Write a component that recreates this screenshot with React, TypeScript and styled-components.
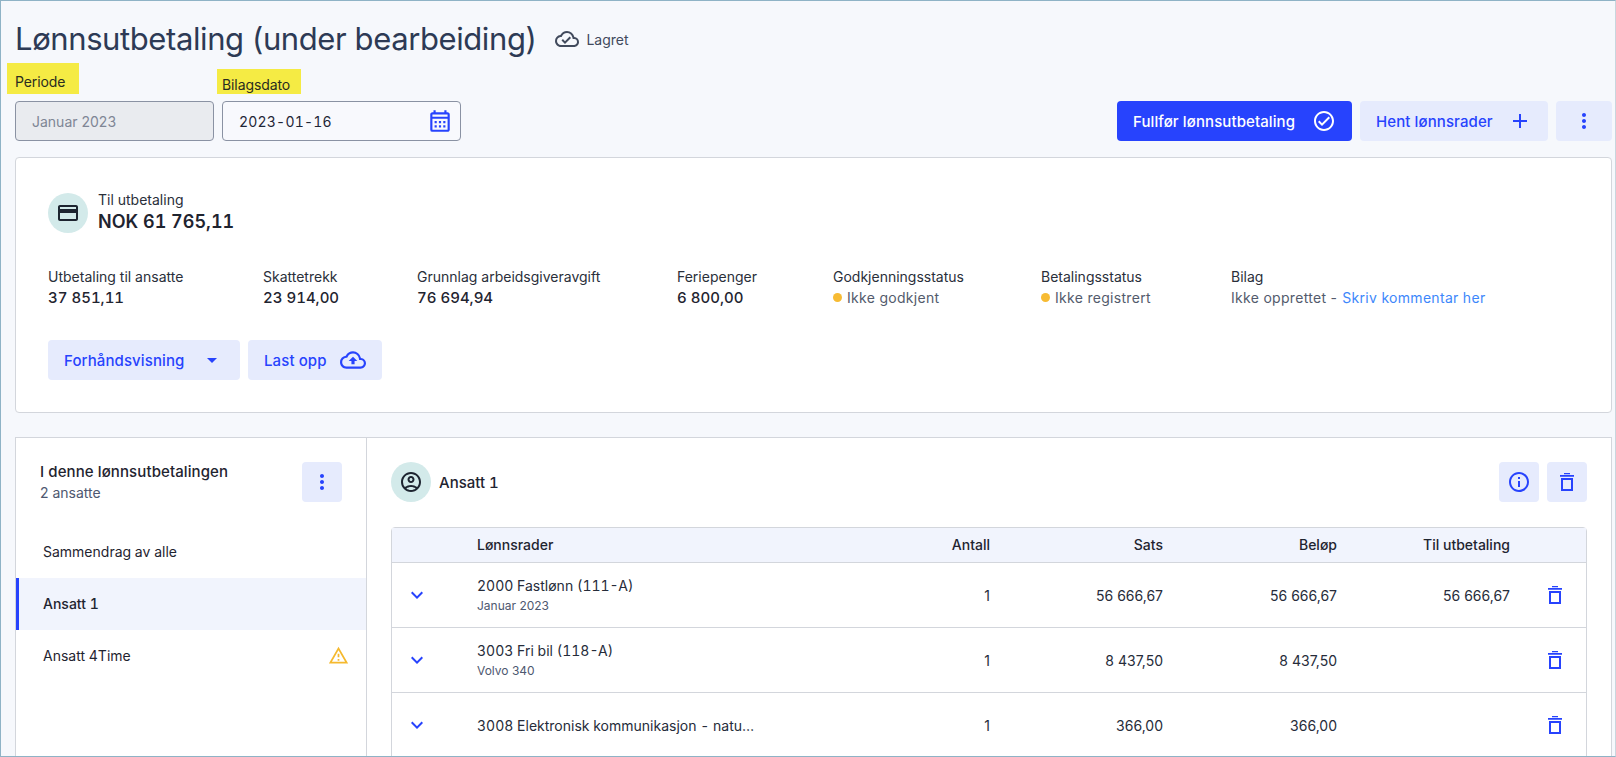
import React from "react";
import styled, { createGlobalStyle } from "styled-components";
import {
  MdAdd,
  MdArrowDropDown,
  MdExpandMore,
  MdInfoOutline,
  MdMoreVert,
  MdOutlineAccountCircle,
  MdOutlineCalendarMonth,
  MdOutlineCheckCircle,
  MdOutlineCloudDone,
  MdOutlineCloudUpload,
  MdOutlineCreditCard,
  MdOutlineWarningAmber,
} from "react-icons/md";

const GlobalStyle = createGlobalStyle`
  html, body {
    margin: 0;
    padding: 0;
    height: 100%;
    overflow: hidden;
    background: #f6f8fc;
  }
  * {
    box-sizing: border-box;
  }
  body {
    font-family: "Inter", "Liberation Sans", sans-serif;
    color: #1f2430;
  }
`;

function TrashIcon() {
  return (
    <svg width="24" height="24" viewBox="0 0 24 24" fill="currentColor">
      <path d="M9 3h6v1.3H9zM5 5h14v1.7H5z" />
      <path d="M6 8h12v13H6zM8 10v9h8v-9z" fillRule="evenodd" />
    </svg>
  );
}

const stats = [
  { label: "Utbetaling til ansatte", value: "37 851,11", width: 215 },
  { label: "Skattetrekk", value: "23 914,00", width: 154 },
  { label: "Grunnlag arbeidsgiveravgift", value: "76 694,94", width: 260 },
  { label: "Feriepenger", value: "6 800,00", width: 156 },
];

const rows = [
  { title: "2000 Fastlønn (111-A)", sub: "Januar 2023", count: "1", rate: "56 666,67", sum: "56 666,67", pay: "56 666,67" },
  { title: "3003 Fri bil (118-A)", sub: "Volvo 340", count: "1", rate: "8 437,50", sum: "8 437,50", pay: "" },
  { title: "3008 Elektronisk kommunikasjon - naturalytelse", sub: "", count: "1", rate: "366,00", sum: "366,00", pay: "" },
];

export default function App() {
  return (
    <Page>
      <GlobalStyle />
      <TitleRow>
        <Title>Lønnsutbetaling (under bearbeiding)</Title>
        <SavedState>
          <MdOutlineCloudDone size={24} />
          Lagret
        </SavedState>
      </TitleRow>

      <Toolbar>
        <Fields>
          <Field>
            <Marked $top={0} $left={8} $right={14}>Periode</Marked>
            <Input $disabled>Januar 2023</Input>
          </Field>
          <DateField>
            <Marked $top={6} $left={5} $right={11}>Bilagsdato</Marked>
            <Input>
              <DateValue>2023-01-16</DateValue>
              <MdOutlineCalendarMonth size={26} color="#2743fd" />
            </Input>
          </DateField>
        </Fields>
        <Actions>
          <PrimaryButton>
            Fullfør lønnsutbetaling
            <MdOutlineCheckCircle size={24} />
          </PrimaryButton>
          <SoftButton $width={188}>
            Hent lønnsrader
            <MdAdd size={24} />
          </SoftButton>
          <IconButton $width={56}>
            <MdMoreVert size={24} />
          </IconButton>
        </Actions>
      </Toolbar>

      <SummaryCard>
        <TotalRow>
          <IconCircle>
            <MdOutlineCreditCard size={24} />
          </IconCircle>
          <div>
            <TotalLabel>Til utbetaling</TotalLabel>
            <TotalValue>NOK 61 765,11</TotalValue>
          </div>
        </TotalRow>

        <StatRow>
          {stats.map((s) => (
            <Stat key={s.label} $width={s.width}>
              <StatLabel>{s.label}</StatLabel>
              <StatValue>{s.value}</StatValue>
            </Stat>
          ))}
          <Stat $width={208}>
            <StatLabel>Godkjenningsstatus</StatLabel>
            <StatusText>
              <Dot />
              Ikke godkjent
            </StatusText>
          </Stat>
          <Stat $width={190}>
            <StatLabel>Betalingsstatus</StatLabel>
            <StatusText>
              <Dot />
              Ikke registrert
            </StatusText>
          </Stat>
          <Stat $width={300}>
            <StatLabel>Bilag</StatLabel>
            <StatusText>
              Ikke opprettet -<CommentLink>Skriv kommentar her</CommentLink>
            </StatusText>
          </Stat>
        </StatRow>

        <CardButtons>
          <SoftButton $width={192}>
            Forhåndsvisning
            <MdArrowDropDown size={24} />
          </SoftButton>
          <SoftButton $width={134}>
            Last opp
            <MdOutlineCloudUpload size={26} />
          </SoftButton>
        </CardButtons>
      </SummaryCard>

      <Panel>
        <Sidebar>
          <SideHeader>
            <div>
              <SideTitle>I denne lønnsutbetalingen</SideTitle>
              <SideSub>2 ansatte</SideSub>
            </div>
            <IconButton $width={40}>
              <MdMoreVert size={24} />
            </IconButton>
          </SideHeader>
          <NavItem>Sammendrag av alle</NavItem>
          <NavItem $active>Ansatt 1</NavItem>
          <NavItem>
            Ansatt 4Time
            <MdOutlineWarningAmber size={21} color="#f5b92e" />
          </NavItem>
        </Sidebar>

        <Detail>
          <DetailHeader>
            <Employee>
              <IconCircle>
                <MdOutlineAccountCircle size={24} />
              </IconCircle>
              Ansatt 1
            </Employee>
            <DetailActions>
              <IconButton $width={40}>
                <MdInfoOutline size={24} />
              </IconButton>
              <IconButton $width={40}>
                <TrashIcon />
              </IconButton>
            </DetailActions>
          </DetailHeader>

          <Table>
            <HeadRow>
              <span />
              <span>Lønnsrader</span>
              <HeadRight>Antall</HeadRight>
              <HeadRight>Sats</HeadRight>
              <HeadRight>Beløp</HeadRight>
              <HeadRight>Til utbetaling</HeadRight>
              <span />
            </HeadRow>
            {rows.map((r) => (
              <BodyRow key={r.title}>
                <RowToggle>
                  <MdExpandMore size={24} />
                </RowToggle>
                <div>
                  <RowTitle>{r.title}</RowTitle>
                  {r.sub && <RowSub>{r.sub}</RowSub>}
                </div>
                <Cell>{r.count}</Cell>
                <Cell>{r.rate}</Cell>
                <Cell>{r.sum}</Cell>
                <Cell>{r.pay}</Cell>
                <RowDelete>
                  <TrashIcon />
                </RowDelete>
              </BodyRow>
            ))}
          </Table>
        </Detail>
      </Panel>
    </Page>
  );
}

const Page = styled.div`
  height: 757px;
  padding: 0 3px 0 14px;
  overflow: hidden;
  background: #f6f8fc;
  border: 1px solid #8fb3c6;
  border-right-color: #c8d6de;
`;
const TitleRow = styled.div`
  display: flex;
  align-items: center;
  height: 62px;
  padding-top: 14px;
`;
const Title = styled.h1`
  margin: 0;
  font-size: 31px;
  font-weight: 400;
  line-height: 44px;
  letter-spacing: -0.4px;
  color: #2d3a55;
`;
const SavedState = styled.div`
  display: flex;
  align-items: center;
  gap: 7px;
  margin-left: 19px;
  font-size: 14px;
  color: #414a5c;
`;
const Toolbar = styled.div`
  display: flex;
  justify-content: space-between;
  align-items: flex-end;
  height: 78px;
`;
const Fields = styled.div`
  display: flex;
  gap: 8px;
`;
const Field = styled.div`
  width: 199px;
`;
const DateField = styled(Field)`
  width: 239px;
`;
const Marked = styled.div<{ $top: number; $left: number; $right: number }>`
  display: flex;
  align-items: center;
  width: fit-content;
  height: ${(p) => 31 - p.$top}px;
  margin: ${(p) => p.$top}px 0 7px ${(p) => -p.$left}px;
  padding: 6px ${(p) => p.$right}px 0 ${(p) => p.$left}px;
  font-size: 14px;
  letter-spacing: -0.1px;
  background: #f5eb44;
  color: #2a2c20;
`;
const Input = styled.div<{ $disabled?: boolean }>`
  display: flex;
  align-items: center;
  justify-content: space-between;
  height: 40px;
  padding: 0 7px 0 16px;
  font-size: 14px;
  border: 1px solid #8a92a3;
  border-radius: 4px;
  background: ${(p) => (p.$disabled ? "#e9ebef" : "#f8f9fd")};
  color: ${(p) => (p.$disabled ? "#7f8695" : "#1f2637")};
`;
const DateValue = styled.span`
  font-variant-numeric: tabular-nums;
  letter-spacing: 0.2px;
`;
const Actions = styled.div`
  display: flex;
  gap: 8px;
`;
const Button = styled.button`
  display: flex;
  align-items: center;
  justify-content: space-between;
  height: 40px;
  padding: 0 16px;
  border: 0;
  border-radius: 4px;
  font-family: inherit;
  font-size: 15px;
  font-weight: 500;
  letter-spacing: 0.1px;
`;
const PrimaryButton = styled(Button)`
  width: 235px;
  background: #2743fd;
  color: #fff;
`;
const SoftButton = styled(Button)<{ $width: number }>`
  width: ${(p) => p.$width}px;
  background: #e6ebfd;
  color: #2743fd;
`;
const IconButton = styled(SoftButton)`
  justify-content: center;
  padding: 0;
`;
const SummaryCard = styled.section`
  height: 256px;
  margin-top: 16px;
  padding: 33px 32px 0;
  background: #fff;
  border: 1px solid #d3d6dc;
  border-radius: 4px;
`;
const TotalRow = styled.div`
  display: flex;
  align-items: center;
  gap: 10px;
`;
const IconCircle = styled.div`
  display: flex;
  align-items: center;
  justify-content: center;
  width: 40px;
  height: 40px;
  border-radius: 50%;
  background: #d3eaea;
  color: #1d2430;
`;
const TotalLabel = styled.div`
  font-size: 14px;
  line-height: 17px;
  color: #2a2f3a;
`;
const TotalValue = styled.div`
  font-size: 18px;
  font-weight: 600;
  line-height: 27px;
  font-variant-numeric: tabular-nums;
  color: #1f2430;
`;
const StatRow = styled.div`
  display: flex;
  margin-top: 32px;
`;
const Stat = styled.div<{ $width: number }>`
  flex: none;
  width: ${(p) => p.$width}px;
`;
const StatLabel = styled.div`
  font-size: 14px;
  line-height: 20px;
  color: #2a2f3a;
`;
const StatValue = styled.div`
  font-size: 15px;
  font-weight: 500;
  line-height: 21px;
  font-variant-numeric: tabular-nums;
  color: #1f2430;
`;
const StatusText = styled.div`
  display: flex;
  align-items: center;
  gap: 5px;
  font-size: 14px;
  line-height: 21px;
  letter-spacing: 0.3px;
  white-space: pre;
  color: #535b6c;
`;
const Dot = styled.span`
  width: 9px;
  height: 9px;
  border-radius: 50%;
  background: #f7bb33;
`;
const CommentLink = styled.span`
  color: #3d87fb;
`;
const CardButtons = styled.div`
  display: flex;
  gap: 8px;
  margin-top: 32px;
`;
const Panel = styled.section`
  display: flex;
  height: 340px;
  margin-top: 24px;
  background: #fff;
  border: 1px solid #d3d6dc;
`;
const Sidebar = styled.aside`
  flex: none;
  width: 351px;
  border-right: 1px solid #d3d6dc;
`;
const SideHeader = styled.div`
  display: flex;
  justify-content: space-between;
  align-items: center;
  height: 88px;
  padding: 0 24px;
`;
const SideTitle = styled.div`
  font-size: 15px;
  font-weight: 500;
  line-height: 22px;
  letter-spacing: 0.1px;
  color: #1f2430;
`;
const SideSub = styled.div`
  font-size: 14px;
  line-height: 20px;
  color: #4e5870;
`;
const NavItem = styled.div<{ $active?: boolean }>`
  display: flex;
  align-items: center;
  justify-content: space-between;
  height: 52px;
  padding: 0 17px 2px ${(p) => (p.$active ? 24 : 27)}px;
  font-size: 14px;
  font-weight: ${(p) => (p.$active ? 500 : 400)};
  font-variant-numeric: tabular-nums;
  background: ${(p) => (p.$active ? "#f1f4fd" : "transparent")};
  border-left: ${(p) => (p.$active ? "3px solid #2743fd" : "0")};
  color: #1f2430;
`;
const Detail = styled.div`
  flex: 1;
  min-width: 0;
  padding: 24px 24px 0;
`;
const DetailHeader = styled.div`
  display: flex;
  justify-content: space-between;
  align-items: center;
  margin-bottom: 25px;
`;
const Employee = styled.div`
  display: flex;
  align-items: center;
  gap: 8px;
  font-size: 15px;
  font-weight: 500;
  font-variant-numeric: tabular-nums;
`;
const DetailActions = styled.div`
  display: flex;
  gap: 8px;
`;
const Table = styled.div`
  border: 1px solid #d3d6dc;
  border-radius: 4px 4px 0 0;
`;
const columns = "85px 1fr 100px 173px 174px 173px 76px";
const HeadRow = styled.div`
  display: grid;
  grid-template-columns: ${columns};
  align-items: center;
  height: 35px;
  padding-bottom: 1px;
  font-size: 14px;
  font-weight: 500;
  background: #f1f4fd;
  border-bottom: 1px solid #d3d6dc;
`;
const HeadRight = styled.span`
  text-align: right;
`;
const BodyRow = styled.div`
  display: grid;
  grid-template-columns: ${columns};
  align-items: center;
  height: 65px;
  border-bottom: 1px solid #d3d6dc;
`;
const RowToggle = styled.div`
  display: flex;
  padding-left: 13px;
  color: #2743fd;
`;
const RowDelete = styled.div`
  display: flex;
  justify-content: flex-end;
  padding-right: 19px;
  color: #2743fd;
`;
const RowTitle = styled.div`
  max-width: 280px;
  overflow: hidden;
  white-space: nowrap;
  text-overflow: ellipsis;
  font-size: 14px;
  line-height: 21px;
  font-variant-numeric: tabular-nums;
  color: #262c3a;
`;
const RowSub = styled.div`
  font-size: 12px;
  line-height: 20px;
  color: #4e5870;
`;
const Cell = styled.div`
  text-align: right;
  font-size: 14px;
  color: #262c3a;
`;
